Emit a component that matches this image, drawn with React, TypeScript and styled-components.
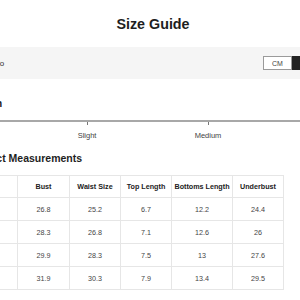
import React from 'react';
import styled, { createGlobalStyle } from 'styled-components';

const GlobalStyle = createGlobalStyle`
  html, body {
    margin: 0;
    padding: 0;
    background: #fff;
    overflow: hidden;
  }
  body {
    font-family: "Liberation Sans", Arial, sans-serif;
    color: #222;
  }
`;

const stretchStops = ['None', 'Slight', 'Medium', 'High'];
const headers = ['Size', 'Bust', 'Waist Size', 'Top Length', 'Bottoms Length', 'Underbust'];
const widths = [52, 52, 51, 51, 61, 51];
const rows = [
  ['S', '26.8', '25.2', '6.7', '12.2', '24.4'],
  ['M', '28.3', '26.8', '7.1', '12.6', '26'],
  ['L', '29.9', '28.3', '7.5', '13', '27.6'],
  ['XL', '31.9', '30.3', '7.9', '13.4', '29.5'],
];

export default function App() {
  return (
    <>
      <GlobalStyle />
      <Page>
        <Header>
          <Title>Size Guide</Title>
        </Header>

        <UnitBar>
          <UnitLabel>Size Info</UnitLabel>
          <Toggle>
            <ToggleOption>CM</ToggleOption>
            <ToggleOption $active>IN</ToggleOption>
          </Toggle>
        </UnitBar>

        <Section>
          <SectionTitle>Stretch</SectionTitle>
          <Track>
            {stretchStops.map((s) => (
              <Stop key={s}>
                <Tick />
                <StopLabel>{s}</StopLabel>
              </Stop>
            ))}
          </Track>
        </Section>

        <Section $gap={12}>
          <SectionTitle>Product Measurements</SectionTitle>
          <Table>
            <colgroup>
              {widths.map((w, i) => (
                <Col key={i} $w={w} />
              ))}
            </colgroup>
            <thead>
              <tr>
                {headers.map((h) => (
                  <Th key={h}>{h}</Th>
                ))}
              </tr>
            </thead>
            <tbody>
              {rows.map((r) => (
                <tr key={r[0]}>
                  {r.map((v, i) => (
                    <Td key={i}>{v}</Td>
                  ))}
                </tr>
              ))}
            </tbody>
          </Table>
        </Section>
      </Page>
    </>
  );
}

const Page = styled.div`
  width: 390px;
  margin-left: -50px;
`;

const Header = styled.div`
  height: 47px;
  display: flex;
  align-items: center;
  justify-content: center;
  padding-left: 16px;
`;

const Title = styled.h1`
  margin: 0;
  font-size: 14.3px;
  font-weight: 700;
  color: #1e1e1e;
`;

const UnitBar = styled.div`
  height: 32px;
  background: #f5f5f5;
  display: flex;
  align-items: center;
  justify-content: space-between;
  padding: 0 19px 0 23px;
`;

const UnitLabel = styled.span`
  font-size: 8px;
  color: #333;
`;

const Toggle = styled.div`
  display: flex;
  height: 14px;
`;

const ToggleOption = styled.div<{ $active?: boolean }>`
  width: 29px;
  box-sizing: border-box;
  display: flex;
  align-items: center;
  justify-content: center;
  font-size: 7px;
  color: ${(p) => (p.$active ? '#fff' : '#444')};
  background: ${(p) => (p.$active ? '#222' : '#fff')};
  border: 1px solid ${(p) => (p.$active ? '#222' : '#9a9a9a')};
`;

const Section = styled.div<{ $gap?: number }>`
  margin-top: ${(p) => p.$gap ?? 18}px;
  padding-left: 16px;
`;

const SectionTitle = styled.h2`
  margin: 0;
  font-size: 10.5px;
  line-height: 12px;
  font-weight: 700;
  color: #1e1e1e;
`;

const Track = styled.div`
  margin-top: 11px;
  width: 363px;
  border-top: 2px solid #a8a8a8;
  display: flex;
  justify-content: space-between;
`;

const Stop = styled.div`
  width: 0;
  display: flex;
  flex-direction: column;
  align-items: center;
`;

const Tick = styled.div`
  width: 1px;
  height: 3px;
  background: #777;
`;

const StopLabel = styled.span`
  margin-top: 6px;
  font-size: 7.5px;
  line-height: 9px;
  color: #444;
  white-space: nowrap;
`;

const Table = styled.table`
  margin-top: 11px;
  margin-left: -1px;
  border-collapse: collapse;
  table-layout: fixed;
  width: 318px;
`;

const Col = styled.col<{ $w: number }>`
  width: ${(p) => p.$w}px;
`;

const Th = styled.th`
  height: 21px;
  padding: 0;
  border: 1px solid #e6e6e6;
  font-size: 7.2px;
  font-weight: 700;
  color: #222;
  text-align: center;
  white-space: nowrap;
`;

const Td = styled.td`
  height: 22px;
  padding: 0;
  border: 1px solid #e6e6e6;
  font-size: 7.2px;
  color: #444;
  text-align: center;
`;
